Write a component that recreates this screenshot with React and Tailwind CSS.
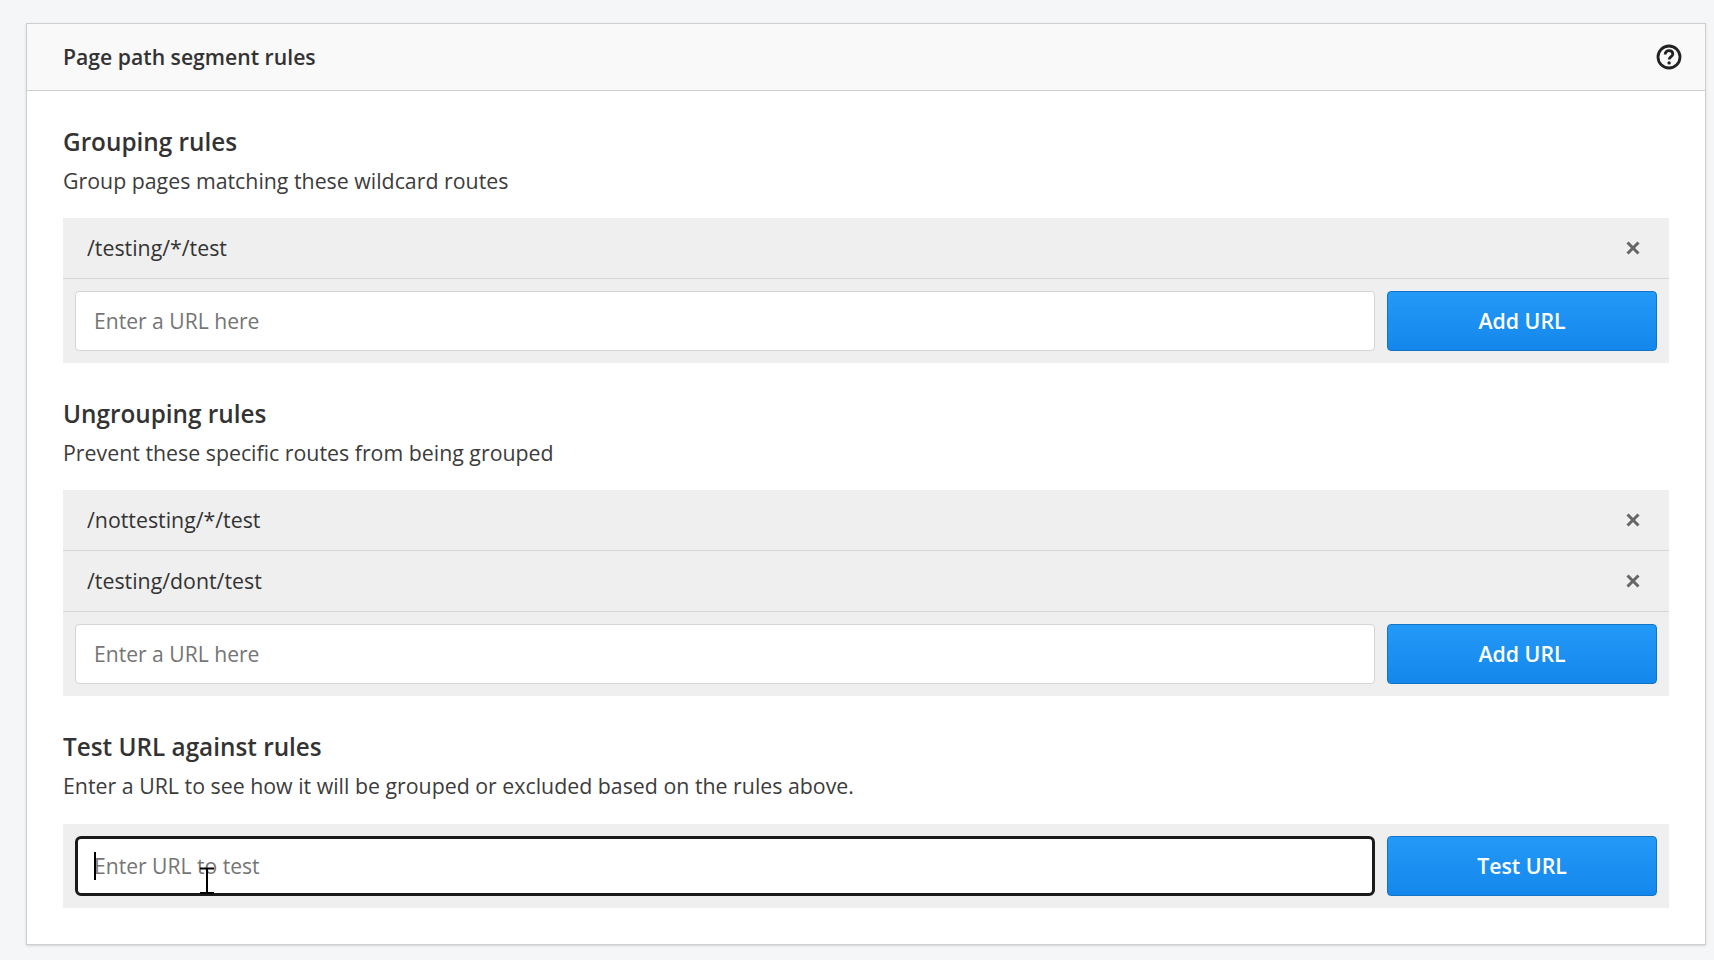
import { useEffect, useRef } from "react"

const font = "font-['Open_Sans',sans-serif]"

function RuleRow({ path }) {
    return (
        <div className="flex h-[61px] items-center justify-between border-b border-[#d6d6d6] pl-[24px] pr-[29px]">
            <span className="text-[21.33px] text-[#333333]">{path}</span>
            <svg width="14" height="14" viewBox="0 0 14 14" className="text-[#666666]">
                <path d="M1.5 1.5 L12.5 12.5 M12.5 1.5 L1.5 12.5" stroke="currentColor" strokeWidth="3" />
            </svg>
        </div>
    )
}

function UrlForm({ placeholder, button, focused }) {
    const inputRef = useRef(null)

    useEffect(() => {
        if (focused && inputRef.current) inputRef.current.blur()
    }, [focused])

    return (
        <div className="flex gap-[12px] p-[12px]">
            <div className="relative flex-1">
                <input
                    ref={inputRef}
                    placeholder={placeholder}
                    className={`h-[60px] w-full bg-white px-[18px] pb-[2px] text-[21.1px] text-[#333333] outline-none placeholder:text-[#757575] ${
                        focused ? "rounded-[6px] border-[3px] border-[#1a1a1a] pl-[16px]" : "rounded-[4px] border border-[#d4d4d4]"
                    }`}
                />
                {focused && (
                    <>
                        {/* text caret */}
                        <div className="absolute left-[19px] top-[16px] h-[28px] w-[2px] bg-black" />
                        {/* mouse pointer */}
                        <svg width="16" height="28" viewBox="0 0 16 28" className="absolute left-[124px] top-[31px]">
                            <path d="M1 1.5 H15 M8 1.5 V26 M1 26 H15" stroke="#000000" strokeWidth="2" fill="none" />
                        </svg>
                    </>
                )}
            </div>
            <button className="h-[60px] w-[270px] rounded-[4px] border border-[#1473c4] bg-gradient-to-b from-[#2399f8] to-[#1487ec] text-[21.33px] font-semibold text-white">
                {button}
            </button>
        </div>
    )
}

function Section({ title, description, panelClass = "mt-[21px]", children }) {
    return (
        <section>
            <h3 className="text-[24.3px] font-semibold leading-[34px] text-[#333333]">{title}</h3>
            <p className="mt-[6px] text-[21.33px] leading-[32px] text-[#3c3c3c]">{description}</p>
            <div className={`bg-[#efefef] ${panelClass}`}>{children}</div>
        </section>
    )
}

export default function App() {
    return (
        <div className={`min-h-[960px] bg-[#f5f6f8] pb-[15px] pl-[26px] pr-[8px] pt-[23px] ${font}`}>
            <div className="h-[922px] border border-[#cfcfcf] bg-white shadow-sm">
                <div className="flex h-[67px] items-center justify-between border-b border-[#cfcfcf] bg-[#f9f9f9] pl-[36px] pr-[23px]">
                    <h2 className="pb-[1px] text-[21.2px] font-semibold text-[#333333]">Page path segment rules</h2>
                    <svg width="26" height="26" viewBox="0 0 26 26">
                        <circle cx="13" cy="13" r="11" fill="none" stroke="#222222" strokeWidth="2.8" />
                        <path d="M9.2 10.4 C9.2 8 11 6.6 13 6.6 C15.2 6.6 16.8 8 16.8 10 C16.8 12.6 13.2 12.8 13.2 15.6" fill="none" stroke="#222222" strokeWidth="2.8" />
                        <circle cx="13.1" cy="18.9" r="1.7" fill="#222222" />
                    </svg>
                </div>

                <div className="flex flex-col gap-[34px] px-[36px] pt-[34px]">
                    <Section title="Grouping rules" description="Group pages matching these wildcard routes">
                        <RuleRow path="/testing/*/test" />
                        <UrlForm placeholder="Enter a URL here" button="Add URL" />
                    </Section>

                    <Section title="Ungrouping rules" description="Prevent these specific routes from being grouped">
                        <RuleRow path="/nottesting/*/test" />
                        <RuleRow path="/testing/dont/test" />
                        <UrlForm placeholder="Enter a URL here" button="Add URL" />
                    </Section>

                    <Section
                        title="Test URL against rules"
                        description="Enter a URL to see how it will be grouped or excluded based on the rules above."
                        panelClass="mt-[22px]"
                    >
                        <UrlForm placeholder="Enter URL to test" button="Test URL" focused />
                    </Section>
                </div>
            </div>
        </div>
    )
}
